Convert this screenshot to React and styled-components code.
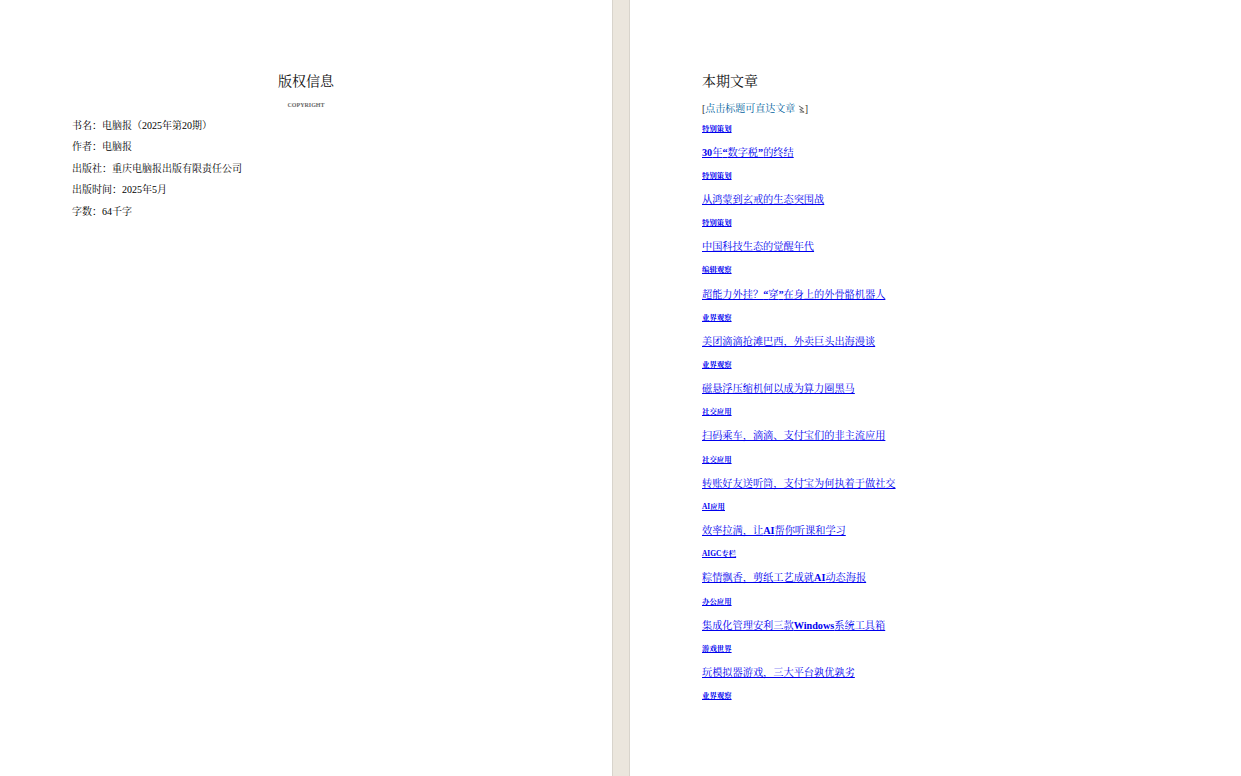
import React from "react";
import styled, { createGlobalStyle } from "styled-components";

const Global = createGlobalStyle`
  html, body { margin: 0; padding: 0; background: #fff; }
  body { font-family: "Liberation Serif", "Noto Serif CJK SC", "Noto Sans CJK SC", serif; color: #000; overflow: hidden; }
`;

const Spread = styled.div`
  display: grid;
  grid-template-columns: 612px 18px 1fr;
  height: 776px;
  overflow: hidden;
`;
const Page = styled.section`
  padding: 72px 72px 0;
  background: #fff;
  min-width: 0;
`;
const Gutter = styled.div`
  background: #ebe6dd;
  border-left: 1px solid #d8d4cc;
  border-right: 1px solid #d8d4cc;
`;
const Title = styled.h1`
  margin: 0;
  padding-top: 1px;
  font-size: 14px;
  line-height: 18px;
  font-weight: 400;
  color: #111;
  text-align: ${(p) => (p.$center ? "center" : "left")};
`;
const Copyright = styled.div`
  margin-top: 10px;
  margin-bottom: 11px;
  font-size: 6px;
  line-height: 8px;
  font-weight: 700;
  color: #666;
  text-align: center;
`;
const Meta = styled.p`
  margin: 0 0 9.4px;
  font-size: 10px;
  line-height: 12px;
`;
const Hint = styled.div`
  margin-top: 11px;
  font-size: 10px;
  line-height: 14px;
  color: #333;
`;
const HintLink = styled.span`
  color: #005f9e;
`;
const Arrow = styled.svg`
  width: 7px;
  height: 8px;
  margin: 0 0 0 2.5px;
  vertical-align: -1px;
`;
const List = styled.div`
  margin-top: 7.6px;
  display: flex;
  flex-direction: column;
`;
const Label = styled.a`
  display: block;
  height: 10px;
  margin-bottom: 12.05px;
  font-size: 7.4px;
  line-height: 10px;
  font-weight: 700;
  color: #00e;
  text-decoration: underline;
`;
const Article = styled.a`
  display: block;
  height: 14px;
  margin-bottom: 11.25px;
  font-size: 10.2px;
  line-height: 14px;
  color: #00e;
  text-decoration: underline;
`;
const Latin = styled.b`
  font-weight: 700;
`;

const meta = ["书名：电脑报（2025年第20期）", "作者：电脑报", "出版社：重庆电脑报出版有限责任公司", "出版时间：2025年5月", "字数：64千字"];
const items = [
  ["特别策划", <><Latin>30</Latin>年<Latin>“</Latin>数字税<Latin>”</Latin>的终结</>],
  ["特别策划", "从鸿蒙到玄戒的生态突围战"],
  ["特别策划", "中国科技生态的觉醒年代"],
  ["编辑观察", <>超能力外挂？<Latin>“</Latin>穿<Latin>”</Latin>在身上的外骨骼机器人</>],
  ["业界观察", "美团滴滴抢滩巴西，外卖巨头出海漫谈"],
  ["业界观察", "磁悬浮压缩机何以成为算力圈黑马"],
  ["社交应用", "扫码乘车，滴滴、支付宝们的非主流应用"],
  ["社交应用", "转账好友送听筒，支付宝为何执着于做社交"],
  ["AI应用", <>效率拉满，让<Latin>AI</Latin>帮你听课和学习</>],
  ["AIGC专栏", <>粽情飘香，剪纸工艺成就<Latin>AI</Latin>动态海报</>],
  ["办公应用", <>集成化管理安利三款<Latin>Windows</Latin>系统工具箱</>],
  ["游戏世界", "玩模拟器游戏，三大平台孰优孰劣"],
  ["业界观察", null],
];

export default function App() {
  return (
    <>
      <Global />
      <Spread>
        <Page>
          <Title $center>版权信息</Title>
          <Copyright>COPYRIGHT</Copyright>
          {meta.map((m) => <Meta key={m}>{m}</Meta>)}
        </Page>
        <Gutter />
        <Page>
          <Title>本期文章</Title>
          <Hint>
            [<HintLink>点击标题可直达文章</HintLink>
            <Arrow viewBox="0 0 8 9" fill="none" stroke="#555" strokeWidth="1">
              <path d="M1 1l5 3-4 1 5 3H2" />
            </Arrow>]
          </Hint>
          <List>
            {items.map(([l, a], i) => (
              <React.Fragment key={i}>
                <Label>{l}</Label>
                {a && <Article>{a}</Article>}
              </React.Fragment>
            ))}
          </List>
        </Page>
      </Spread>
    </>
  );
}
